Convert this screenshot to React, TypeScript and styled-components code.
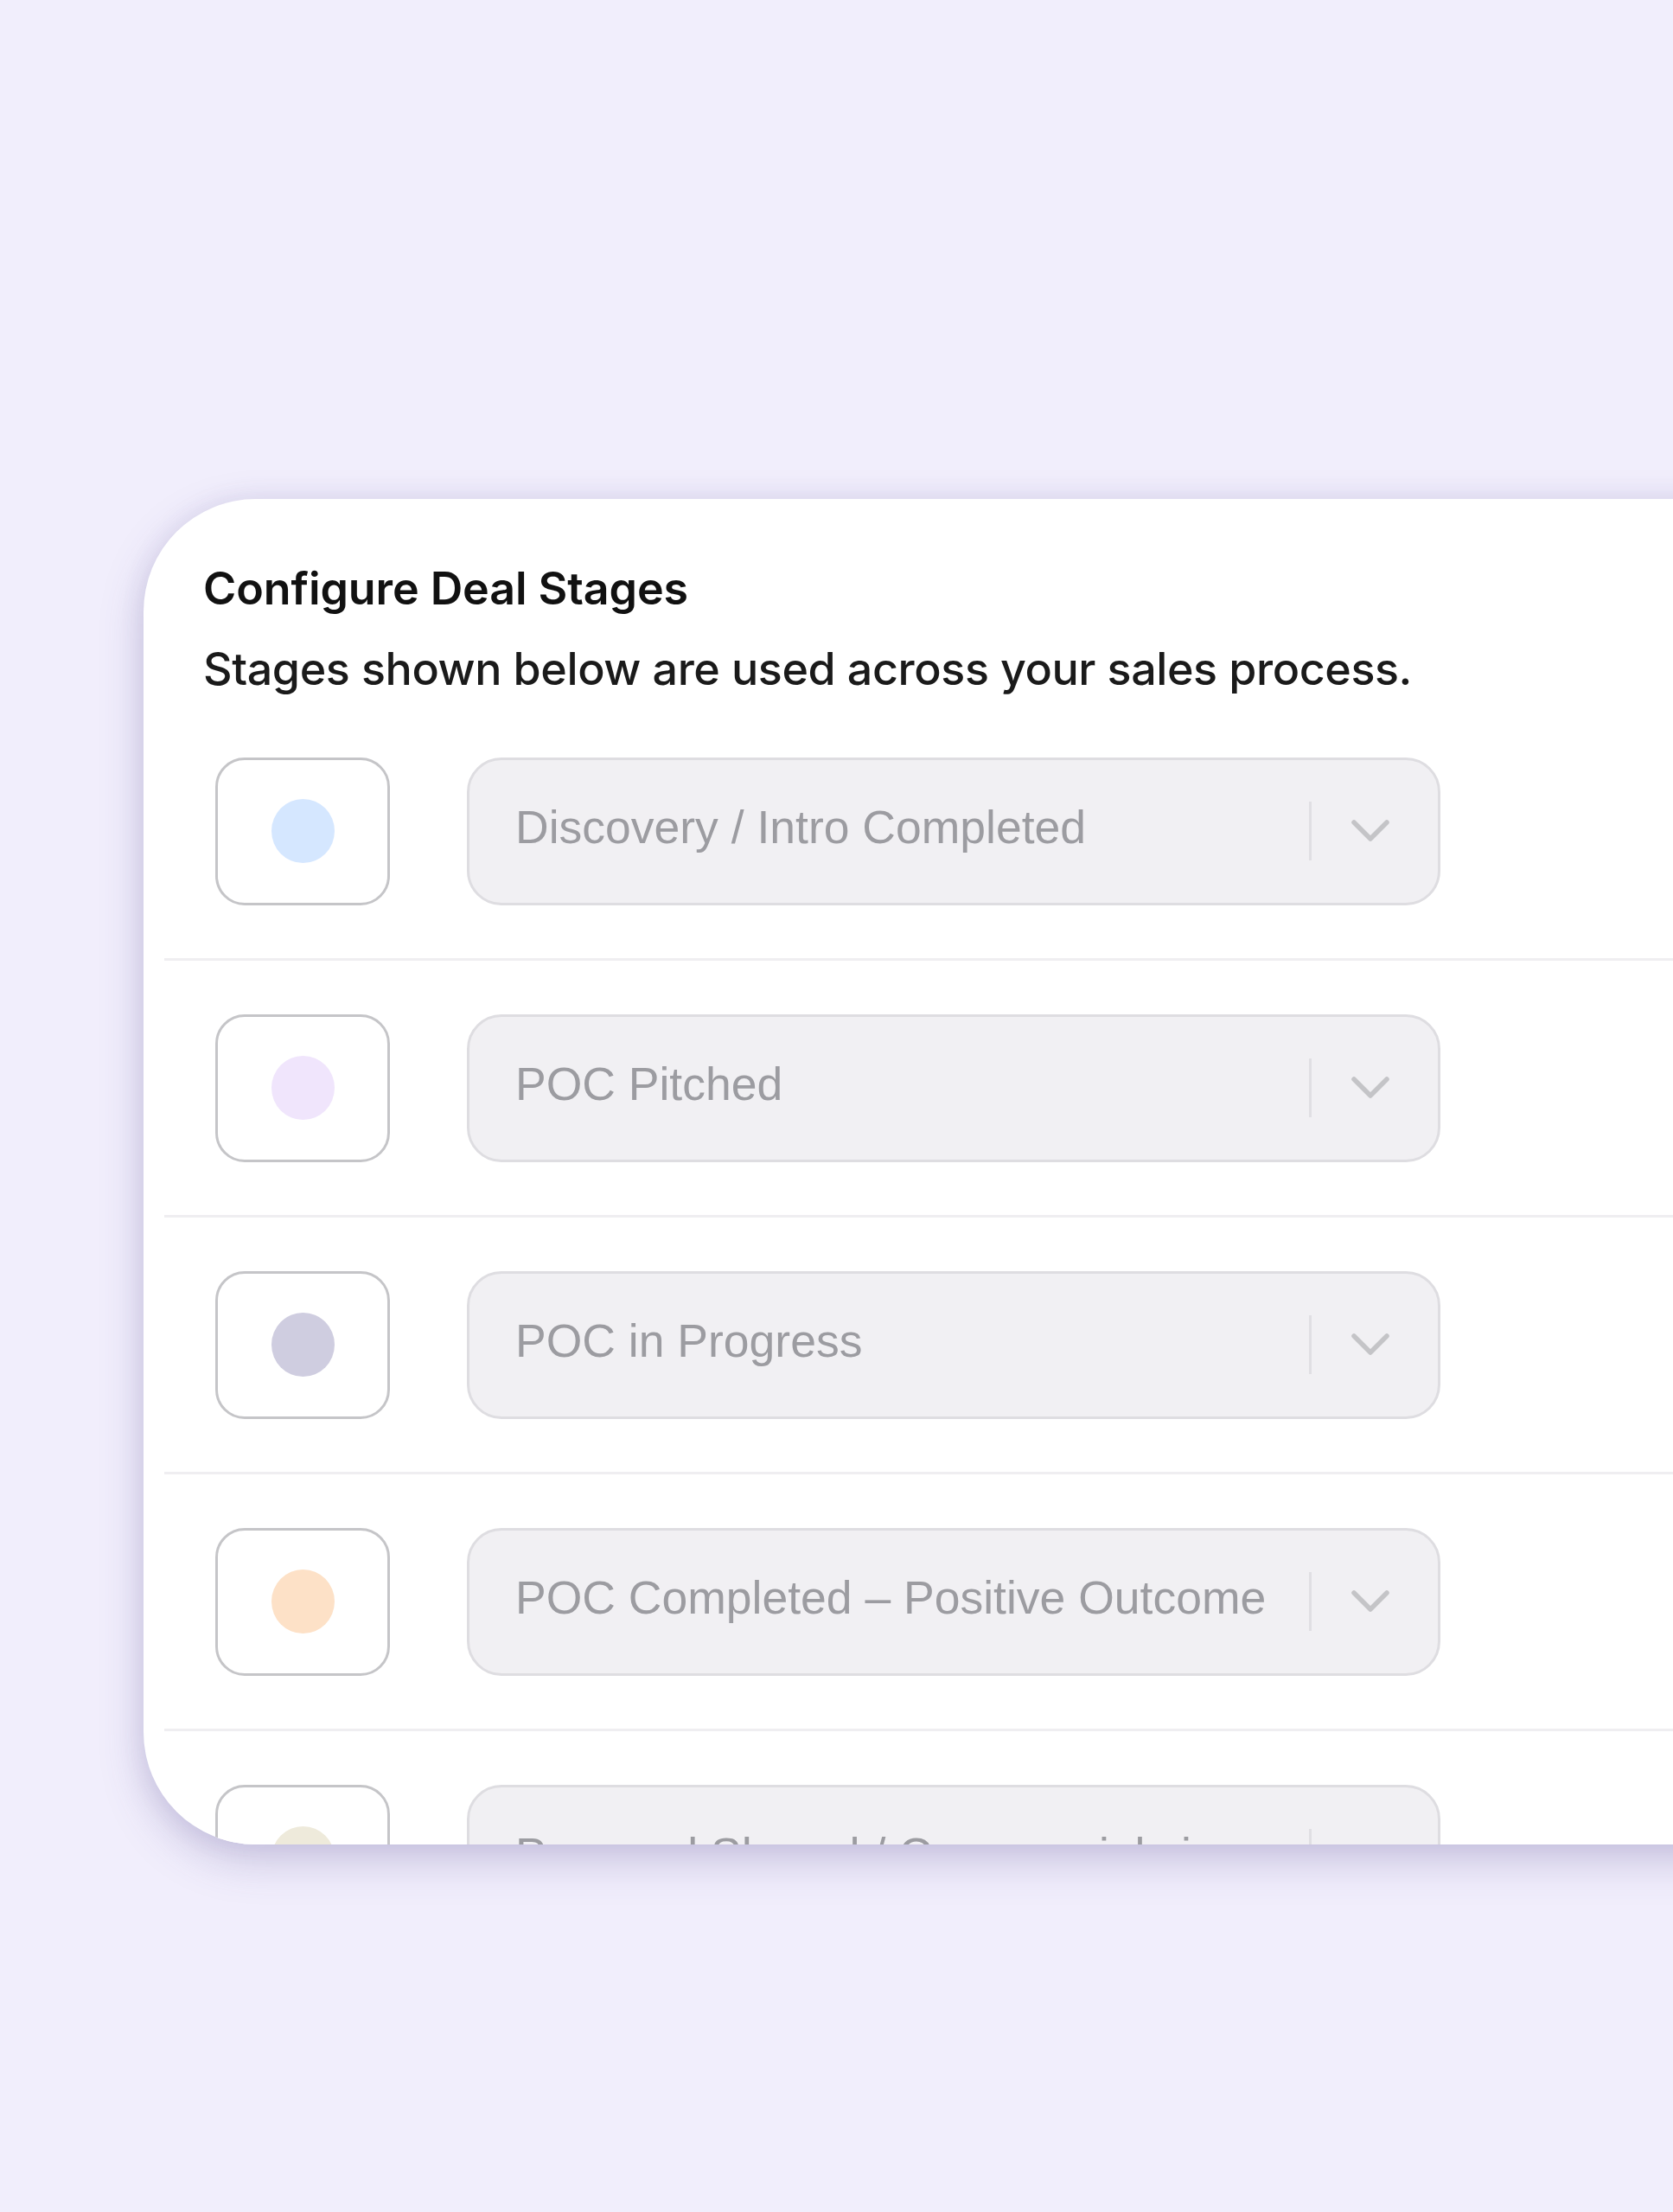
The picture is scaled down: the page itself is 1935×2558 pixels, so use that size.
import React from "react";
import styled, { createGlobalStyle } from "styled-components";

const Global = createGlobalStyle`
  html, body {
    margin: 0;
    padding: 0;
    background: #f1eefc;
    overflow: hidden;
  }
  * { box-sizing: border-box; }
`;

const Page = styled.div`
  width: 1935px;
  height: 2558px;
  padding: 577px 0 0 166px;
  overflow: hidden;
  background: #f1eefc;
`;

const Card = styled.section`
  width: 2000px;
  height: 1556px;
  background: #ffffff;
  border-radius: 130px 0 0 130px;
  box-shadow: 0 18px 50px rgba(80, 70, 140, 0.26), 0 0 30px rgba(80, 70, 140, 0.08);
  overflow: hidden;
  padding: 73px 0 0 24px;
`;

const Header = styled.header`
  padding-left: 45px;
  display: flex;
  flex-direction: column;
  gap: 31px;
`;

const Title = styled.h1`
  margin: 0;
  font-family: Inter, "Liberation Sans", sans-serif;
  font-weight: 600;
  font-size: 52px;
  line-height: 1.2;
  color: #111111;
  letter-spacing: -0.1px;
`;

const Subtitle = styled.p`
  margin: 0;
  font-family: Inter, "Liberation Sans", sans-serif;
  font-weight: 500;
  font-size: 52px;
  line-height: 1.2;
  color: #1a1a1a;
  letter-spacing: -0.4px;
`;

const List = styled.div`
  margin-top: 8px;
  display: flex;
  flex-direction: column;
`;

const Row = styled.div`
  display: flex;
  align-items: center;
  gap: 89px;
  padding: 62px 0 61px 59px;
  border-bottom: 3px solid #efeef1;
`;

const Swatch = styled.div`
  width: 202px;
  height: 171px;
  border: 3px solid #c5c5c8;
  border-radius: 34px;
  background: #ffffff;
  display: flex;
  align-items: center;
  justify-content: center;
  flex-shrink: 0;
`;

const Dot = styled.span<{ $color: string }>`
  width: 73px;
  height: 74px;
  border-radius: 50%;
  background: ${(p) => p.$color};
`;

const Select = styled.div`
  width: 1126px;
  height: 171px;
  border: 3px solid #dedde1;
  border-radius: 40px;
  background: #f1f0f3;
  display: flex;
  align-items: center;
  padding: 0 0 0 53px;
  flex-shrink: 0;
`;

const Value = styled.span`
  flex: 1;
  min-width: 0;
  font-family: "Liberation Sans", Arial, sans-serif;
  font-size: 53.5px;
  color: #9c9ca1;
  white-space: nowrap;
  overflow: hidden;
  text-overflow: ellipsis;
  padding: 0 12px 10px 0;
`;

const Separator = styled.span`
  width: 3px;
  height: 68px;
  background: #e0dfe3;
  flex-shrink: 0;
`;

const ChevronWrap = styled.span`
  width: 146px;
  display: flex;
  align-items: center;
  justify-content: center;
  flex-shrink: 0;
  padding-right: 10px;
`;

const Chevron = () => (
  <svg width="44" height="26" viewBox="0 0 44 26" fill="none">
    <polyline
      points="3,3 22,22 41,3"
      stroke="#c4c4c7"
      strokeWidth="5.5"
      strokeLinecap="round"
      strokeLinejoin="round"
    />
  </svg>
);

const stages = [
  { name: "Discovery / Intro Completed", color: "#d5e7ff" },
  { name: "POC Pitched", color: "#f0e5fc" },
  { name: "POC in Progress", color: "#cfcde0" },
  { name: "POC Completed – Positive Outcome", color: "#fde1c7" },
  { name: "Proposal Shared / Commercials in Discussion", color: "#eeeadb" },
];

export default function App() {
  return (
    <>
      <Global />
      <Page>
        <Card>
          <Header>
            <Title>Configure Deal Stages</Title>
            <Subtitle>Stages shown below are used across your sales process.</Subtitle>
          </Header>
          <List>
            {stages.map((s) => (
              <Row key={s.name}>
                <Swatch>
                  <Dot $color={s.color} />
                </Swatch>
                <Select>
                  <Value>{s.name}</Value>
                  <Separator />
                  <ChevronWrap>
                    <Chevron />
                  </ChevronWrap>
                </Select>
              </Row>
            ))}
          </List>
        </Card>
      </Page>
    </>
  );
}
